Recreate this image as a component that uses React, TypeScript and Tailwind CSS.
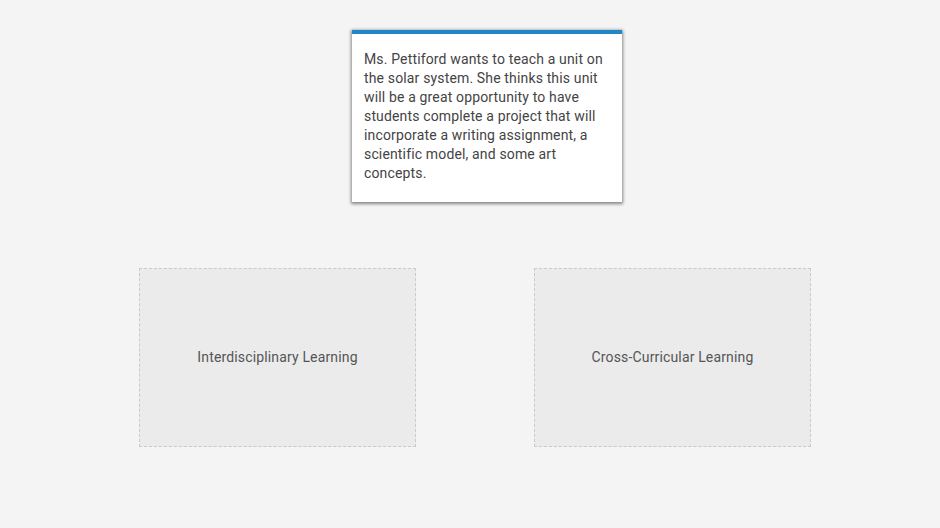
export default function App() {
  return (
    <div className="w-[940px] h-[528px] bg-[#f4f4f4] overflow-hidden" style={{ fontFamily: "Roboto, 'Liberation Sans', sans-serif" }}>
      <div className="pt-[30px] pl-[352px]">
        <div className="w-[270px] h-[172px] bg-white border-t-4 border-[#1f86c7] shadow-[0_1px_3px_1px_rgba(0,0,0,0.45)] px-3 pt-[16px]">
          <p className="text-[14px] leading-[19px] text-[#444] tracking-[0.15px]">
            Ms. Pettiford wants to teach a unit on the solar system. She thinks this unit will be a great opportunity to have students complete a project that will incorporate a writing assignment, a scientific model, and some art concepts.
          </p>
        </div>
      </div>
      <div className="flex gap-[118px] pl-[139px] mt-[66px]">
        <div className="w-[277px] h-[179px] bg-[#ebebeb] border border-dashed border-[#cacaca] flex items-center justify-center">
          <span className="text-[14px] text-[#555] tracking-[0.15px]">Interdisciplinary Learning</span>
        </div>
        <div className="w-[277px] h-[179px] bg-[#ebebeb] border border-dashed border-[#cacaca] flex items-center justify-center">
          <span className="text-[14px] text-[#555] tracking-[0.15px]">Cross-Curricular Learning</span>
        </div>
      </div>
    </div>
  );
}
